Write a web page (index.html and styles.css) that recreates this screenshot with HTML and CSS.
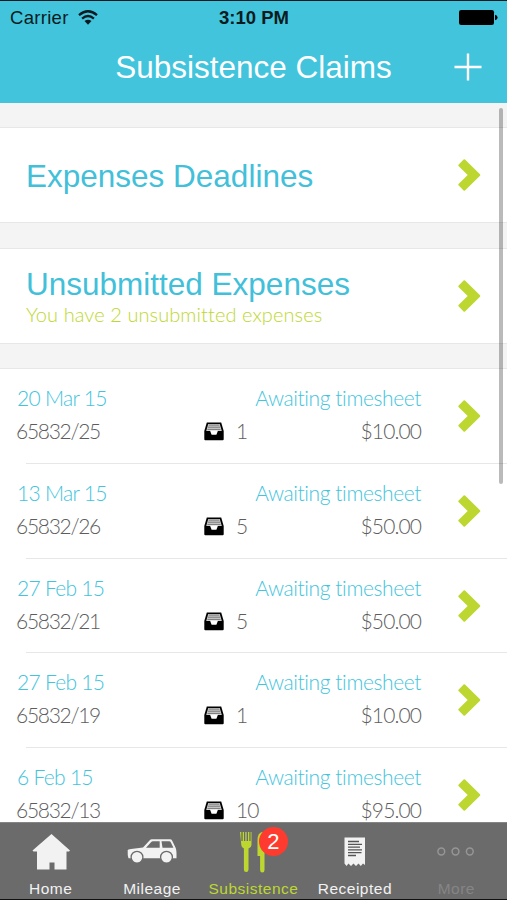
FILE: index.html
```html
<!DOCTYPE html>
<html lang="en">
<head>
<meta charset="utf-8">
<title>Subsistence Claims</title>
<link rel="stylesheet" href="styles.css">
</head>
<body>
<svg class="defs" width="0" height="0" aria-hidden="true">
  <symbol id="chevron" viewBox="0 0 24 34"><path d="M1.500 6.800 6.600 1.500Q7.300.9 8 1.500L23 16.200Q23.700 17 23 17.800L8 32.500Q7.300 33.100 6.600 32.500L1.500 27.200Q1 26.500 1.500 25.900L10.700 17 1.500 8.100Q1 7.500 1.500 6.800Z" fill="#bdd730"/></symbol>
  <symbol id="tray" viewBox="0 0 20 19">
    <path d="M2.800.5h14.400L19.700 9v8.200q0 1-1 1H1.300q-1 0-1-1V9Z" fill="#000"/>
    <path d="M4.200 2.100h11.600l2 6.900h-4.600l-1.300 2.500H8.100L6.800 9H2.200Z" fill="#ccc"/>
    <path d="M4.700 3.100h10.600M4 5.200h12M3.400 7.400h13.200" stroke="#555" stroke-width=".7"/>
    <path d="M6 8.500h8l-1.600 4.200H7.600Z" fill="#fff"/>
  </symbol>
</svg>
<div class="screen">
  <header class="header">
    <div class="status">
      <span class="carrier"><span class="carrier-name">Carrier</span>
        <svg width="20" height="15" viewBox="0 0 20 15"><g fill="none" stroke="#071b20" stroke-width="2.300"><path d="M1 5.100Q10-2.600 19 5.100M4.100 8.600Q10 3.500 15.900 8.600"/></g><path d="M6.500 11.100Q10 8.200 13.500 11.100L10 14.800Z" fill="#071b20"/></svg>
      </span>
      <span class="time">3:10 PM</span>
      <svg class="battery" width="39" height="15" viewBox="0 0 39 15"><rect width="35" height="15" rx="2.200"/><path d="M36 4.700q2.600.6 2.600 2.800T36 10.300Z"/></svg>
    </div>
    <div class="navbar">
      <h1 class="title">Subsistence Claims</h1>
      <svg class="add" width="28" height="28" viewBox="0 0 28 28"><path d="M14 .5v27M.5 14h27" stroke="#fff" stroke-width="2.400"/></svg>
    </div>
  </header>
  <main class="content">
    <section class="card">
      <div><h2 class="heading">Expenses Deadlines</h2></div>
      <svg class="chevron"><use href="#chevron"/></svg>
    </section>
    <section class="card">
      <div><h2 class="heading">Unsubmitted Expenses</h2><p class="note">You have 2 unsubmitted expenses</p></div>
      <svg class="chevron"><use href="#chevron"/></svg>
    </section>
    <ul class="claims">
      <li class="claim"><span class="date">20 Mar 15</span><span class="state">Awaiting timesheet</span><span class="ref">65832/25</span><svg class="tray"><use href="#tray"/></svg><span class="count">1</span><span class="amount">$10.00</span><svg class="chevron"><use href="#chevron"/></svg></li>
      <li class="claim"><span class="date">13 Mar 15</span><span class="state">Awaiting timesheet</span><span class="ref">65832/26</span><svg class="tray"><use href="#tray"/></svg><span class="count">5</span><span class="amount">$50.00</span><svg class="chevron"><use href="#chevron"/></svg></li>
      <li class="claim"><span class="date">27 Feb 15</span><span class="state">Awaiting timesheet</span><span class="ref">65832/21</span><svg class="tray"><use href="#tray"/></svg><span class="count">5</span><span class="amount">$50.00</span><svg class="chevron"><use href="#chevron"/></svg></li>
      <li class="claim"><span class="date">27 Feb 15</span><span class="state">Awaiting timesheet</span><span class="ref">65832/19</span><svg class="tray"><use href="#tray"/></svg><span class="count">1</span><span class="amount">$10.00</span><svg class="chevron"><use href="#chevron"/></svg></li>
      <li class="claim"><span class="date">6 Feb 15</span><span class="state">Awaiting timesheet</span><span class="ref">65832/13</span><svg class="tray"><use href="#tray"/></svg><span class="count">10</span><span class="amount">$95.00</span><svg class="chevron"><use href="#chevron"/></svg></li>
    </ul>
    <div class="scrollbar"></div>
  </main>
  <nav class="tabs">
    <a class="tab"><svg width="60" height="50" viewBox="0 0 60 50"><path d="M30.500 11 49 27.500 48 28.500H45.500V46.500H33.500V39.500H28.500V46.500H16V28.500H12.500L11.500 27.500Z" fill="#f2f2f2"/></svg><span>Home</span></a>
    <a class="tab"><svg width="60" height="50" viewBox="0 0 60 50"><path d="M5.700 27Q6 26.500 9 26L21 24.500 27.500 17.500Q28.500 16.300 30 16.300H48Q49.500 16.300 50.200 17.700L53.700 25Q54.500 27 54.500 30V35.300H6.500Q5.400 32 5.700 27Z" fill="#f2f2f2"/><path d="M24 24.800 29 19.300Q29.800 18.300 31 18.300H37.700V24.800ZM39.500 18.300H47.200Q48.300 18.300 48.800 19.300L51.400 24.800H40.500Z" fill="#6b6b6b"/><g fill="#f2f2f2" stroke="#6b6b6b" stroke-width="1.300"><circle cx="15" cy="34.200" r="5.900"/><circle cx="44.500" cy="34.200" r="5.900"/></g></svg><span>Mileage</span></a>
    <a class="tab active"><svg width="60" height="50" viewBox="0 0 60 50"><g fill="#bdd730"><path d="M17 9h1.300v9h1.400v-9h1.300v9h1.300v-9h1.300v9h1.400v-9h1.300v9h1.300v-9h.9v13q0 2-3 3.500v21q0 2.500-2.300 2.500t-2.300-2.500v-21q-2.600-1.500-2.600-3.500Z"/><path d="M39 9q-4.500 1-4.500 8v16h2.600v14q0 2.500 2.200 2.500t2.200-2.500V9Z"/></g></svg><span>Subsistence</span><b class="badge">2</b></a>
    <a class="tab"><svg width="60" height="50" viewBox="0 0 60 50"><path d="M19.500 14.500H40V42L38 40.500 35.800 43 33.500 40.500 31 43 28.500 40.500 26 43 23.500 40.500 21.500 43 19.500 40.500Z" fill="#f2f2f2"/><path d="M23 18.500H34M23 21.300H37M23 24.100H35M23 26.900H37M23 29.700H36.500M23 32.500H31" stroke="#555" stroke-width="1.300"/></svg><span>Receipted</span></a>
    <a class="tab more"><svg width="60" height="50" viewBox="0 0 60 50"><g fill="none" stroke="#969696" stroke-width="1.500"><circle cx="15.300" cy="28.500" r="3.400"/><circle cx="29.500" cy="28.500" r="3.400"/><circle cx="43.800" cy="28.500" r="3.400"/></g></svg><span>More</span></a>
  </nav>
</div>
</body>
</html>
```
FILE: styles.css
```css
* { box-sizing: border-box; }
body { margin: 0; font-family: "Liberation Sans", Arial, sans-serif; }
h1, h2, p, ul { margin: 0; padding: 0; font-weight: 400; list-style: none; }
svg { display: block; flex: none; }
.defs { position: absolute; }
.screen { width: 507px; height: 900px; display: flex; flex-direction: column; overflow: hidden; background: #f4f4f4; }
.header { height: 103px; flex: none; background: #42c4dd; border-top: 1.500px solid #071b20; }
.status { height: 34px; padding: 0 9px 0 10px; display: grid; grid-template-columns: 1fr auto 1fr; align-items: center; font-size: 18.500px; color: #071b20; }
.carrier { display: flex; align-items: center; gap: 9px; }
.carrier-name { letter-spacing: .3px; }
.carrier svg { margin-top: -2px; }
.time { font-weight: 700; font-size: 18.500px; }
.battery { justify-self: end; margin-top: -1px; fill: #000; }
.navbar { height: 64px; padding-left: 62px; display: grid; grid-template-columns: 1fr 62px; align-items: center; }
.title { margin-top: -1px; font-size: 31.500px; line-height: 36px; text-align: center; color: #fff; white-space: nowrap; }
.add { margin: -1px 0 0 9px; }
.content { flex: 1; min-height: 0; overflow: hidden; position: relative; padding-top: 24px; }
.card { height: 96px; margin-bottom: 24.500px; padding: 0 26px; display: flex; align-items: center; justify-content: space-between; background: #fff; border: solid #e7e7e7; border-width: 1px 0; }
.heading { margin-top: 2px; font-size: 31.500px; line-height: 36px; color: #42bfd9; white-space: nowrap; }
.note { font: 300 20px/25px Lato, sans-serif; letter-spacing: .08px; font-variant-ligatures: none; color: #bdd730; white-space: nowrap; }
.chevron { width: 24px; height: 34px; }
.claims { background: #fff; border-top: 1px solid #e7e7e7; }
.claim { height: 94.800px; padding: 12px 26px 0 17px; display: grid; grid-template-columns: 187px 32px 60px 125px 1fr; grid-template-rows: 33px 33px; align-items: center; font: 300 21px/33px Lato, sans-serif; font-variant-ligatures: none; color: #5d5d5d; background: linear-gradient(#e7e7e7, #e7e7e7) 26px 100% / 100% 1px no-repeat; }
.date { grid-column: 1; grid-row: 1; color: #42c4dd; letter-spacing: -.7px; }
.state { grid-column: 2 / 5; grid-row: 1; justify-self: end; color: #42c4dd; letter-spacing: -.4px; white-space: nowrap; }
.ref { grid-column: 1; grid-row: 2; margin-left: -1px; letter-spacing: -1.300px; }
.tray { width: 20px; height: 19px; grid-column: 2; grid-row: 2; position: relative; top: 1px; }
.count { grid-column: 3; grid-row: 2; letter-spacing: -.9px; }
.amount { grid-column: 4; grid-row: 2; justify-self: end; letter-spacing: -.9px; }
.claim .chevron { grid-column: 5; grid-row: 1 / 3; justify-self: end; margin-top: 4px; }
.scrollbar { position: absolute; top: 5px; right: 4.500px; width: 4px; height: 376px; border-radius: 2px; background: rgba(0, 0, 0, .27); }
.tabs { height: 78.500px; flex: none; display: grid; grid-template-columns: repeat(5, 1fr); background: #6b6b6b; border-top: 1px solid #858585; border-bottom: 1px solid #111; }
.tab { position: relative; display: flex; flex-direction: column; align-items: center; font-size: 15.500px; line-height: 18px; letter-spacing: .5px; color: #f2f2f2; }
.tab span { margin-top: 7px; }
.active { color: #bdd730; }
.more { color: #969696; }
.more span { color: #858585; }
.badge { position: absolute; left: 56px; top: 4px; width: 29px; height: 29px; border-radius: 50%; background: #ff3b30; color: #fff; font-weight: 400; font-size: 22px; line-height: 29px; text-align: center; letter-spacing: 0; }
```
